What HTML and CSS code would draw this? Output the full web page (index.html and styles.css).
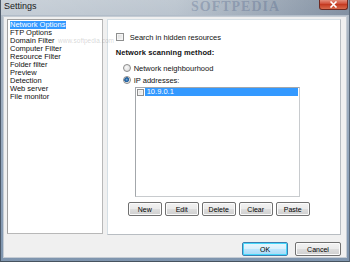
FILE: index.html
```html
<!DOCTYPE html>
<html>
<head>
<meta charset="utf-8">
<link rel="stylesheet" href="styles.css">
</head>
<body>
<div class="window">
  <div class="titlebar">
    <span class="title">Settings</span>
    <span class="watermark">SOFTPEDIA</span>
    <span class="close"><svg width="9" height="7" viewBox="0 0 9 7"><path d="M1.5 0.5 L7.5 6.5 M7.5 0.5 L1.5 6.5" stroke="#fff" stroke-width="1.6"/></svg></span>
  </div>
  <div class="client">
    <div class="main">
      <ul class="nav">
        <li class="sel"><span>Network Options</span></li>
        <li>FTP Options</li>
        <li>Domain Filter<span class="wm">www.softpedia.com</span></li>
        <li>Computer Filter</li>
        <li>Resource Filter</li>
        <li>Folder filter</li>
        <li>Preview</li>
        <li>Detection</li>
        <li>Web server</li>
        <li>File monitor</li>
      </ul>
      <div class="panel">
        <label class="row check-row"><span class="cb"></span>Search in hidden resources</label>
        <div class="heading">Network scanning method:</div>
        <label class="row radio-row"><span class="rb"></span>Network neighbourhood</label>
        <label class="row radio-row"><span class="rb on"></span>IP addresses:</label>
        <div class="iplist">
          <div class="ipitem"><span class="cb small"></span><span class="iptext">10.9.0.1</span></div>
        </div>
        <div class="btnrow">
          <button class="btn">New</button>
          <button class="btn">Edit</button>
          <button class="btn">Delete</button>
          <button class="btn">Clear</button>
          <button class="btn">Paste</button>
        </div>
      </div>
    </div>
    <div class="footer">
      <button class="btn big def">OK</button>
      <button class="btn big">Cancel</button>
    </div>
  </div>
</div>
</body>
</html>
```
FILE: styles.css
```css
* { box-sizing: border-box; }
html, body { margin: 0; padding: 0; }
body {
  width: 350px;
  height: 262px;
  overflow: hidden;
  font-family: "Liberation Sans", Arial, sans-serif;
  font-size: 7.5px;
  color: #111;
  background: linear-gradient(180deg, #b9c3cd 0px, #a7b4c2 40px, #8fa3ba 180px, #7f95ae 262px);
}
.window {
  width: 350px;
  height: 262px;
  display: flex;
  flex-direction: column;
  border-left: 1px solid #4d5a6a;
  border-bottom: 1px solid #46535f;
  border-right: 1px solid #5c6a7a;
}
.titlebar {
  height: 15px;
  flex: none;
  display: flex;
  align-items: center;
  position: relative;
  background: linear-gradient(90deg, rgba(255,255,255,0.25) 0%, rgba(255,255,255,0.1) 50%, rgba(40,60,90,0.35) 100%);
}
.title {
  margin-left: 3px;
  margin-top: -3px;
  font-family: "Liberation Sans", Arial, sans-serif;
  font-size: 9px;
  color: #1a1a1a;
}
.watermark {
  position: absolute;
  left: 190px;
  top: 0px;
  line-height: 14px;
  font-family: "Liberation Serif", serif;
  font-weight: bold;
  font-size: 14px;
  letter-spacing: 1px;
  color: rgba(70, 90, 130, 0.3);
}
.close {
  position: absolute;
  right: 1px;
  top: -1px;
  width: 29px;
  height: 11px;
  border: 1px solid #6e2a22;
  border-top: none;
  border-radius: 0 0 3px 3px;
  background: linear-gradient(180deg, #e8a08f 0%, #d2533d 45%, #c43a21 55%, #d86a4d 100%);
  display: flex;
  align-items: center;
  justify-content: center;
}
.client {
  flex: 1;
  margin: 1px 2px 3px 2px;
  background: #f0f0f0;
  display: flex;
  flex-direction: column;
  border: 1px solid #c5ccd4;
}
.main {
  display: flex;
  padding: 2px 5px 0 3px;
  gap: 4px;
  height: 218px;
}
.nav {
  list-style: none;
  margin: 0;
  padding: 1px 1px;
  width: 96px;
  height: 215px;
  background: #fff;
  border: 1px solid #a0a0a0;
  border-right-color: #b8b8b8;
  border-bottom-color: #b8b8b8;
  position: relative;
}
.nav li {
  height: 8px;
  line-height: 8px;
  padding-left: 1px;
  white-space: nowrap;
}
.nav li.sel span {
  display: inline-block;
  background: #3399ff;
  color: #fff;
  padding: 0 1px 0 0;
  height: 8px;
  line-height: 8px;
}
.wm {
  position: absolute;
  left: 50px;
  color: rgba(120, 120, 120, 0.3);
  font-size: 6.5px;
}
.panel {
  width: 235px;
  height: 216px;
  background: #fff;
  border: 1px solid #d5dfe5;
  border-right-color: #b8bdc2;
  border-bottom-color: #b8bdc2;
  padding: 13px 0 0 8px;
  display: flex;
  flex-direction: column;
}
.row {
  display: flex;
  align-items: center;
  height: 8px;
  white-space: nowrap;
}
.check-row { gap: 6px; }
.cb {
  display: inline-block;
  width: 8px;
  height: 8px;
  flex: none;
  border: 1px solid #8e8f8f;
  background: linear-gradient(135deg, #dcdcdc, #f6f6f6);
  box-shadow: inset 0 0 0 1px #f4f4f4;
}
.heading {
  margin-top: 8px;
  font-weight: bold;
  font-size: 7.5px;
  height: 8px;
  line-height: 8px;
  letter-spacing: 0.1px;
}
.radio-row {
  margin-left: 7px;
  gap: 3px;
  margin-top: 7px;
}
.radio-row + .radio-row { margin-top: 4px; }
.rb {
  display: inline-block;
  width: 8px;
  height: 8px;
  flex: none;
  border-radius: 50%;
  border: 1px solid #8c8c8c;
  background: radial-gradient(circle at 40% 40%, #f8f8f8, #d6d6d6);
}
.rb.on {
  background: radial-gradient(circle at 45% 45%, #7fb2e0 0, #1f5e9c 1.6px, #2f6fae 2.4px, #e0e0e0 2.6px, #f2f2f2 4px);
}
.iplist {
  margin-top: 3px;
  margin-left: 19px;
  width: 165px;
  height: 110px;
  border: 1px solid #a3a7ab;
  border-right-color: #c8cbce;
  border-bottom-color: #c8cbce;
  background: #fff;
  padding: 0 1px 0 1px;
}
.ipitem {
  display: flex;
  align-items: center;
  height: 8px;
  gap: 1px;
}
.cb.small { width: 7px; height: 7px; }
.iptext {
  flex: 1;
  height: 8px;
  line-height: 8px;
  background: #3399ff;
  color: #fff;
  padding-left: 2px;
}
.btnrow {
  display: flex;
  gap: 3px;
  margin-top: 5px;
  margin-left: 12px;
}
.btn {
  width: 34px;
  height: 14px;
  padding: 0;
  font-family: "Liberation Sans", Arial, sans-serif;
  font-size: 7px;
  color: #000;
  border: 1px solid #707070;
  border-radius: 2px;
  background: linear-gradient(180deg, #f2f2f2 0%, #ebebeb 48%, #dddddd 52%, #cfcfcf 100%);
  box-shadow: inset 0 0 0 1px #fbfbfb;
}
.footer {
  display: flex;
  justify-content: flex-end;
  gap: 7px;
  padding: 7px 5px 0 0;
}
.btn.big { width: 46px; }
.btn.def {
  border-color: #3c7fb1;
  box-shadow: inset 0 0 0 1px #48d8fb;
  background: linear-gradient(180deg, #eaf6fd 0%, #d9f0fc 48%, #bee6fd 52%, #a7d9f5 100%);
}
```
